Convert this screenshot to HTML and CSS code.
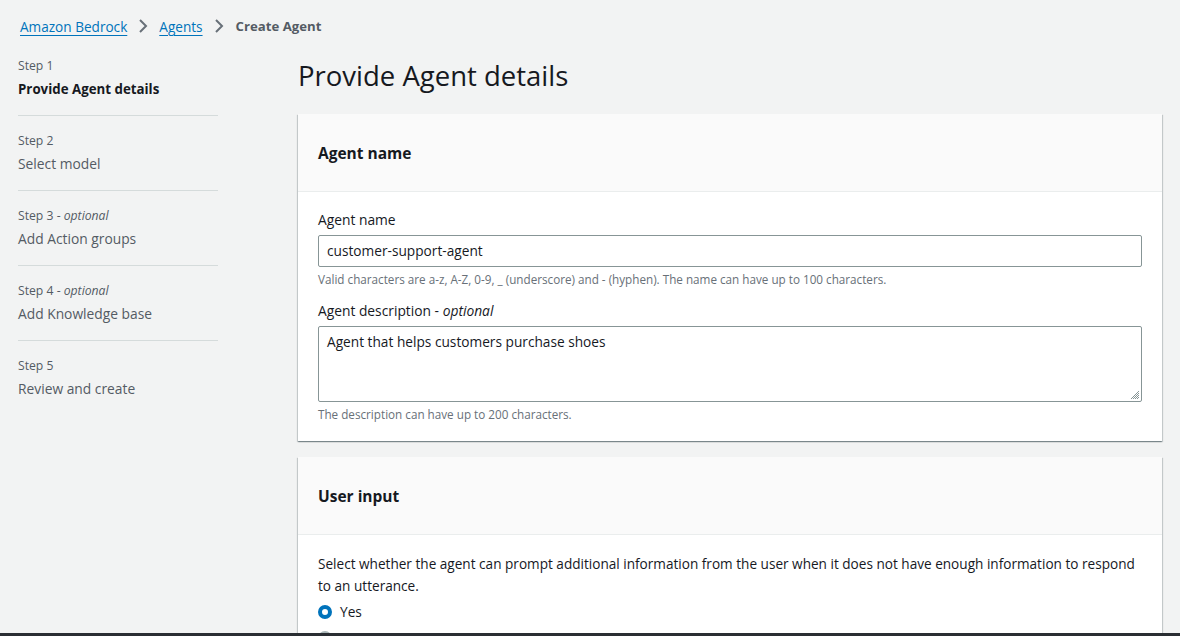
FILE: index.html
```html
<!DOCTYPE html>
<html lang="en">
<head>
<meta charset="utf-8">
<title>Create Agent</title>
<link rel="stylesheet" href="styles.css">
</head>
<body>
<div class="page">
  <nav class="breadcrumbs">
    <a class="crumb-link" href="#">Amazon Bedrock</a>
    <svg class="chev" viewBox="0 0 16 16" width="16" height="16"><path d="M5 2l6 6-6 6" fill="none" stroke="#687078" stroke-width="2"/></svg>
    <a class="crumb-link" href="#">Agents</a>
    <svg class="chev" viewBox="0 0 16 16" width="16" height="16"><path d="M5 2l6 6-6 6" fill="none" stroke="#687078" stroke-width="2"/></svg>
    <span class="crumb-current">Create Agent</span>
  </nav>
  <div class="layout">
    <ul class="steps">
      <li class="step">
        <div class="step-num">Step 1</div>
        <div class="step-title active">Provide Agent details</div>
      </li>
      <li class="step">
        <div class="step-num">Step 2</div>
        <div class="step-title">Select model</div>
      </li>
      <li class="step">
        <div class="step-num">Step 3 - <i>optional</i></div>
        <div class="step-title">Add Action groups</div>
      </li>
      <li class="step">
        <div class="step-num">Step 4 - <i>optional</i></div>
        <div class="step-title">Add Knowledge base</div>
      </li>
      <li class="step">
        <div class="step-num">Step 5</div>
        <div class="step-title">Review and create</div>
      </li>
    </ul>
    <main class="main">
      <h1 class="page-title">Provide Agent details</h1>
      <section class="card">
        <div class="card-header"><h2>Agent name</h2></div>
        <div class="card-body">
          <div class="field">
            <label class="label">Agent name</label>
            <div class="input">customer-support-agent</div>
            <div class="hint">Valid characters are a-z, A-Z, 0-9, _ (underscore) and - (hyphen). The name can have up to 100 characters.</div>
          </div>
          <div class="field">
            <label class="label">Agent description - <i>optional</i></label>
            <div class="textarea">Agent that helps customers purchase shoes
              <svg class="grip" viewBox="0 0 12 12" width="12" height="12"><path d="M11 3L3 11M11 5L5 11M11 7L7 11M11 9L9 11" stroke="#879596" stroke-width="1"/></svg>
            </div>
            <div class="hint">The description can have up to 200 characters.</div>
          </div>
        </div>
      </section>
      <section class="card">
        <div class="card-header"><h2>User input</h2></div>
        <div class="card-body">
          <p class="desc">Select whether the agent can prompt additional information from the user when it does not have enough information to respond to an utterance.</p>
          <div class="radio-row"><span class="radio checked"></span><span>Yes</span></div>
          <div class="radio-row"><span class="radio"></span><span>No</span></div>
        </div>
      </section>
    </main>
  </div>
</div>
<div class="bottom-bar"></div>
</body>
</html>
```

FILE: styles.css
```css
* { box-sizing: border-box; }
html, body { margin: 0; padding: 0; }
body {
  background: #f2f3f3;
  font-family: "Open Sans", "Noto Sans", sans-serif;
  color: #16191f;
  height: 636px;
  overflow: hidden;
}
.page { padding: 14px 18px 0 18px; }
.breadcrumbs {
  display: flex;
  align-items: center;
  gap: 8px;
  padding-left: 2px;
  height: 24px;
  font-size: 13.6px;
}
.crumb-link { color: #0073bb; text-decoration: underline; text-underline-offset: 3px; }
.crumb-current { color: #545b64; font-weight: 700; font-size: 13.2px; margin-left: 1px; }
.chev { display: block; }
.layout {
  display: grid;
  grid-template-columns: 200px 1fr;
  column-gap: 80px;
  margin-top: 16px;
}
.steps { list-style: none; margin: 0; padding: 0; }
.step {
  padding: 16px 0 16px 0;
  border-bottom: 1px solid #d5dbdb;
}
.step:first-child { padding-top: 3px; }
.step:last-child { border-bottom: none; }
.step-num { font-size: 12.2px; color: #545b64; line-height: 18px; }
.step-title { font-size: 13.8px; color: #545b64; line-height: 20px; margin-top: 4px; }
.step-title.active { color: #16191f; font-weight: 700; font-size: 13.3px; }
.page-title {
  font-size: 27.5px;
  font-weight: 400;
  margin: 0;
  line-height: 36px;
  padding-top: 4px;
  height: 60px;
}
.card {
  background: #fff;
  box-shadow: 0 1px 1px 0 rgba(0,28,36,.3), 1px 1px 1px 0 rgba(0,28,36,.15), -1px 1px 1px 0 rgba(0,28,36,.15);
  margin-bottom: 16px;
}
.card-header {
  background: #fafafa;
  border-bottom: 1px solid #eaeded;
  height: 78px;
  display: flex;
  align-items: center;
  padding: 0 20px;
}
.card-header h2 { font-size: 15.5px; font-weight: 700; margin: 0; }
.card-body { padding: 17px 20px 19px 20px; }
.field + .field { margin-top: 13px; }
.label { display: block; font-size: 13.8px; line-height: 22px; margin-bottom: 4px; }
.input {
  height: 32px;
  border: 1px solid #879596;
  border-radius: 2px;
  padding: 0 8px;
  font-size: 13.7px;
  line-height: 30px;
}
.textarea {
  position: relative;
  height: 76px;
  border: 1px solid #879596;
  border-radius: 2px;
  padding: 4px 8px;
  font-size: 13.7px;
  line-height: 22px;
}
.grip { position: absolute; right: 1px; bottom: 1px; }
.hint { font-size: 11.7px; color: #687078; line-height: 16px; margin-top: 4px; }
.desc { margin: 0; font-size: 13.6px; line-height: 22px; padding-top: 1px; }
.radio-row { display: flex; align-items: center; gap: 8px; font-size: 13.7px; line-height: 22px; margin-top: 4px; }
.radio {
  width: 14px; height: 14px; border-radius: 50%;
  border: 2px solid #aab7b8; background: #fff; display: inline-block;
}
.radio.checked { border: 4px solid #0073bb; }
.bottom-bar {
  position: fixed; left: 0; right: 0; bottom: 0; height: 3px; background: #2a2e33;
}
```
